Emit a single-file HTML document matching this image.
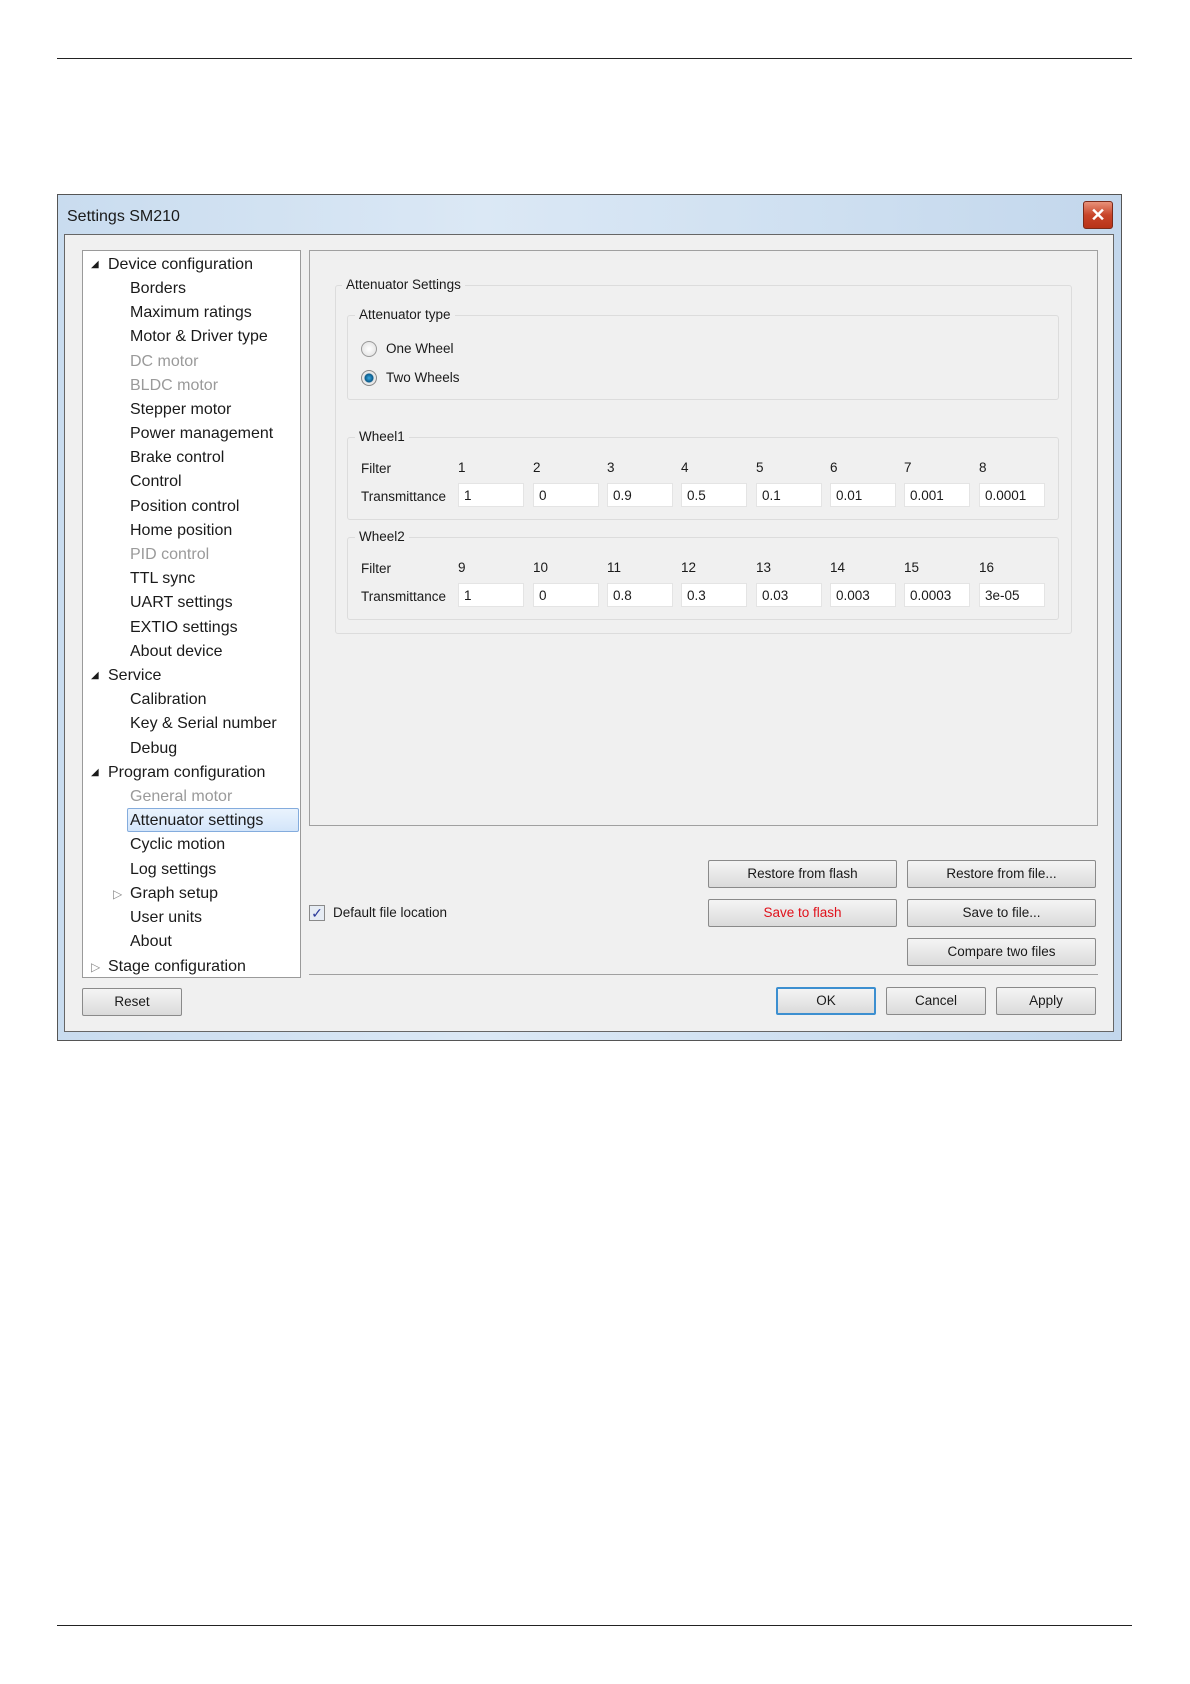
<!DOCTYPE html>
<html><head><meta charset="utf-8"><style>
*{box-sizing:border-box;margin:0;padding:0}
body{width:1190px;height:1684px;background:#fff;position:relative;font-family:"Liberation Sans",sans-serif;overflow:hidden}
.a{position:absolute}
.hl{position:absolute;left:57px;width:1075px;height:1px;background:#222}
.dlg{left:57px;top:194px;width:1065px;height:847px;border:1px solid #555;background:linear-gradient(90deg,#c9dcef,#dbe8f5 40%,#cfe0f1 70%,#c3d7ec);}
.inner{left:64px;top:234px;width:1050px;height:798px;background:#f0f0f0;border:1px solid #666}
.t{position:absolute;font-size:13.5px;color:#1a1a1a;white-space:nowrap;line-height:16px}
.tr{position:absolute;font-size:16px;color:#1a1a1a;white-space:nowrap;line-height:20px;margin-top:2px}
.g{color:#9a9a9a}
.box{position:absolute;border:1px solid #dcdcdc;border-radius:3px}
.in{position:absolute;width:66px;height:24px;background:#fff;border:1px solid #e4e4e4;font-size:13.5px;padding:4px 0 0 5px;line-height:16px;color:#1a1a1a}
.btn{position:absolute;height:28px;border:1px solid #8a8a8a;border-radius:2px;background:linear-gradient(#f4f4f4,#e8e8e8 50%,#dadada);font-size:13.5px;text-align:center;line-height:26px;color:#1a1a1a}
.lab{background:#f0f0f0;padding:0 4px}
</style></head><body>
<div class="hl" style="top:58px"></div>
<div class="hl" style="top:1625px"></div>

<div class="a dlg"></div>
<div class="t" style="left:67px;top:208px;font-size:16px;line-height:18px">Settings SM210</div>
<div class="a" style="left:1083px;top:201px;width:30px;height:28px;border:1px solid #7a2a1a;border-radius:3px;background:linear-gradient(#e8927a,#c8452a 50%,#b83318);color:#fff;font-size:18px;font-weight:bold;text-align:center;line-height:26px">✕</div>
<div class="a inner"></div>

<!-- tree -->
<div class="a" style="left:82px;top:250px;width:219px;height:728px;background:#fff;border:1px solid #9a9a9a"></div>
<div class="a" style="left:127px;top:808px;width:172px;height:24px;border:1px solid #84acdd;border-radius:2px;background:linear-gradient(#eaf3fd,#d3e5fa)"></div>
<div class="tr" style="left:91px;top:253px;font-size:10px">◢</div>
<div class="tr" style="left:108px;top:253px">Device configuration</div>
<div class="tr" style="left:130px;top:277px">Borders</div>
<div class="tr" style="left:130px;top:301px">Maximum ratings</div>
<div class="tr" style="left:130px;top:325px">Motor &amp; Driver type</div>
<div class="tr g" style="left:130px;top:350px">DC motor</div>
<div class="tr g" style="left:130px;top:374px">BLDC motor</div>
<div class="tr" style="left:130px;top:398px">Stepper motor</div>
<div class="tr" style="left:130px;top:422px">Power management</div>
<div class="tr" style="left:130px;top:446px">Brake control</div>
<div class="tr" style="left:130px;top:470px">Control</div>
<div class="tr" style="left:130px;top:495px">Position control</div>
<div class="tr" style="left:130px;top:519px">Home position</div>
<div class="tr g" style="left:130px;top:543px">PID control</div>
<div class="tr" style="left:130px;top:567px">TTL sync</div>
<div class="tr" style="left:130px;top:591px">UART settings</div>
<div class="tr" style="left:130px;top:616px">EXTIO settings</div>
<div class="tr" style="left:130px;top:640px">About device</div>
<div class="tr" style="left:91px;top:664px;font-size:10px">◢</div>
<div class="tr" style="left:108px;top:664px">Service</div>
<div class="tr" style="left:130px;top:688px">Calibration</div>
<div class="tr" style="left:130px;top:712px">Key &amp; Serial number</div>
<div class="tr" style="left:130px;top:737px">Debug</div>
<div class="tr" style="left:91px;top:761px;font-size:10px">◢</div>
<div class="tr" style="left:108px;top:761px">Program configuration</div>
<div class="tr g" style="left:130px;top:785px">General motor</div>
<div class="tr" style="left:130px;top:809px">Attenuator settings</div>
<div class="tr" style="left:130px;top:833px">Cyclic motion</div>
<div class="tr" style="left:130px;top:858px">Log settings</div>
<div class="tr" style="left:113px;top:882px;font-size:12px;color:#888">▷</div>
<div class="tr" style="left:130px;top:882px">Graph setup</div>
<div class="tr" style="left:130px;top:906px">User units</div>
<div class="tr" style="left:130px;top:930px">About</div>
<div class="tr" style="left:91px;top:955px;font-size:12px;color:#888">▷</div>
<div class="tr" style="left:108px;top:955px">Stage configuration</div>

<!-- right panel -->
<div class="a" style="left:309px;top:250px;width:789px;height:576px;border:1px solid #a0a0a0"></div>
<div class="box" style="left:335px;top:285px;width:737px;height:349px"></div>
<div class="t lab" style="left:342px;top:277px">Attenuator Settings</div>
<div class="box" style="left:347px;top:315px;width:712px;height:85px"></div>
<div class="t lab" style="left:355px;top:307px">Attenuator type</div>
<div class="a" style="left:361px;top:341px;width:16px;height:16px;border-radius:50%;border:1px solid #999;background:radial-gradient(#fff,#ddd)"></div>
<div class="t" style="left:386px;top:341px">One Wheel</div>
<div class="a" style="left:361px;top:370px;width:16px;height:16px;border-radius:50%;border:1px solid #888;background:radial-gradient(circle,#3aa8e0 0,#0a5a8a 4px,#e8e8e8 5px)"></div>
<div class="t" style="left:386px;top:370px">Two Wheels</div>

<div class="box" style="left:347px;top:437px;width:712px;height:83px"></div>
<div class="t lab" style="left:355px;top:429px">Wheel1</div>
<div class="t" style="left:361px;top:461px">Filter</div>
<div class="t" style="left:361px;top:489px">Transmittance</div>
<div class="box" style="left:347px;top:537px;width:712px;height:83px"></div>
<div class="t lab" style="left:355px;top:529px">Wheel2</div>
<div class="t" style="left:361px;top:561px">Filter</div>
<div class="t" style="left:361px;top:589px">Transmittance</div>

<div class="t" style="left:458px;top:460px">1</div><div class="in" style="left:458px;top:483px">1</div>
<div class="t" style="left:533px;top:460px">2</div><div class="in" style="left:533px;top:483px">0</div>
<div class="t" style="left:607px;top:460px">3</div><div class="in" style="left:607px;top:483px">0.9</div>
<div class="t" style="left:681px;top:460px">4</div><div class="in" style="left:681px;top:483px">0.5</div>
<div class="t" style="left:756px;top:460px">5</div><div class="in" style="left:756px;top:483px">0.1</div>
<div class="t" style="left:830px;top:460px">6</div><div class="in" style="left:830px;top:483px">0.01</div>
<div class="t" style="left:904px;top:460px">7</div><div class="in" style="left:904px;top:483px">0.001</div>
<div class="t" style="left:979px;top:460px">8</div><div class="in" style="left:979px;top:483px">0.0001</div>

<div class="t" style="left:458px;top:560px">9</div><div class="in" style="left:458px;top:583px">1</div>
<div class="t" style="left:533px;top:560px">10</div><div class="in" style="left:533px;top:583px">0</div>
<div class="t" style="left:607px;top:560px">11</div><div class="in" style="left:607px;top:583px">0.8</div>
<div class="t" style="left:681px;top:560px">12</div><div class="in" style="left:681px;top:583px">0.3</div>
<div class="t" style="left:756px;top:560px">13</div><div class="in" style="left:756px;top:583px">0.03</div>
<div class="t" style="left:830px;top:560px">14</div><div class="in" style="left:830px;top:583px">0.003</div>
<div class="t" style="left:904px;top:560px">15</div><div class="in" style="left:904px;top:583px">0.0003</div>
<div class="t" style="left:979px;top:560px">16</div><div class="in" style="left:979px;top:583px">3e-05</div>

<!-- buttons -->
<div class="btn" style="left:708px;top:860px;width:189px">Restore from flash</div>
<div class="btn" style="left:907px;top:860px;width:189px">Restore from file...</div>
<div class="btn" style="left:708px;top:899px;width:189px;color:#e0101a">Save to flash</div>
<div class="btn" style="left:907px;top:899px;width:189px">Save to file...</div>
<div class="btn" style="left:907px;top:938px;width:189px">Compare two files</div>
<div class="a" style="left:309px;top:905px;width:16px;height:16px;border:1px solid #8a8a8a;background:#e6ecf4;color:#2a3a9a;font-size:14px;line-height:14px;text-align:center">✓</div>
<div class="t" style="left:333px;top:905px">Default file location</div>
<div class="a" style="left:309px;top:974px;width:789px;height:1px;background:#a0a0a0"></div>

<div class="btn" style="left:82px;top:988px;width:100px">Reset</div>
<div class="btn" style="left:776px;top:987px;width:100px;border:2px solid #3c8fd0;line-height:24px">OK</div>
<div class="btn" style="left:886px;top:987px;width:100px">Cancel</div>
<div class="btn" style="left:996px;top:987px;width:100px">Apply</div>
</body></html>
